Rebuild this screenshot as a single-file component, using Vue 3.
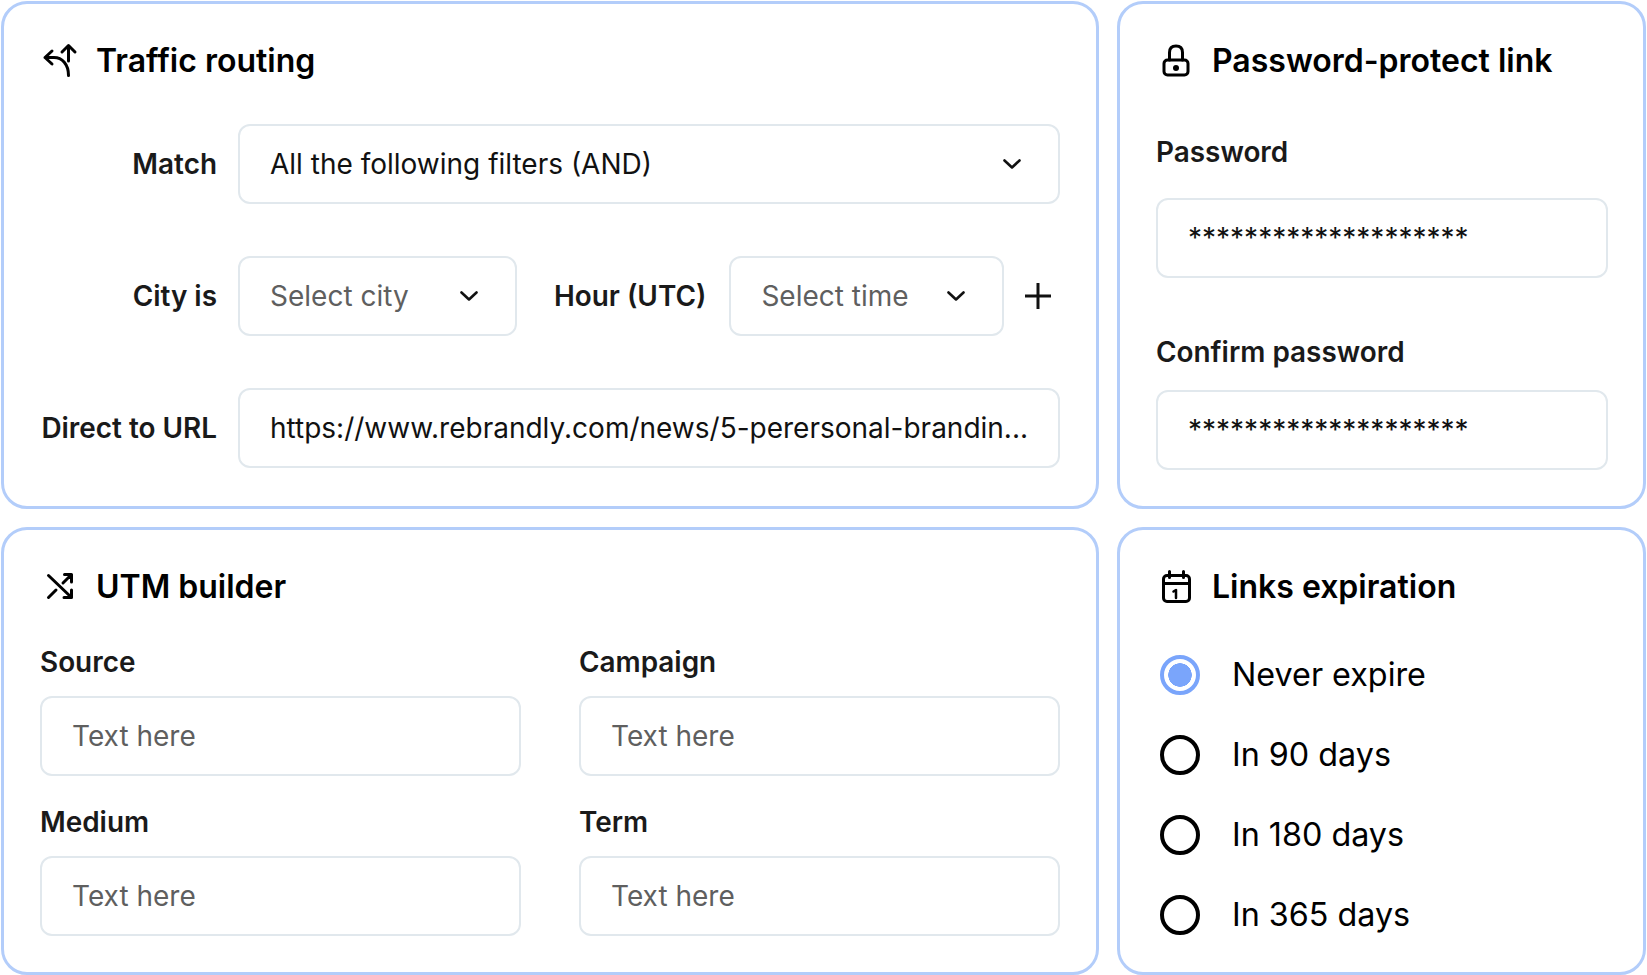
<script setup>
const utm = ['Source', 'Campaign', 'Medium', 'Term']
const options = [
  { label: 'Never expire', on: true },
  { label: 'In 90 days', on: false },
  { label: 'In 180 days', on: false },
  { label: 'In 365 days', on: false },
]
</script>

<template>
  <div class="page">
    <section class="card">
      <h2 class="title">
        <svg class="ico" viewBox="0 0 36 36"><path d="M12 9 5 15.500 12 22M5 15.500H14C22 15.500 28.500 22 28.500 33.500M22 10 28.500 3.500 35 10M28.500 3.500V19" /></svg>
        Traffic routing
      </h2>
      <div class="rows">
        <div class="row">
          <span class="lab side">Match</span>
          <div class="field grow">
            <span class="val">All the following filters (AND)</span>
            <svg class="chev" viewBox="0 0 18 10"><path d="M1.500 1.500 9 8.500 16.500 1.500" /></svg>
          </div>
        </div>
        <div class="row">
          <span class="lab side">City is</span>
          <div class="field city">
            <span class="ph">Select city</span>
            <svg class="chev" viewBox="0 0 18 10"><path d="M1.500 1.500 9 8.500 16.500 1.500" /></svg>
          </div>
          <span class="lab hour">Hour (UTC)</span>
          <div class="field time">
            <span class="ph">Select time</span>
            <svg class="chev" viewBox="0 0 18 10"><path d="M1.500 1.500 9 8.500 16.500 1.500" /></svg>
          </div>
          <svg class="plus" viewBox="0 0 26 26"><path d="M13 0V26M0 13H26" /></svg>
        </div>
        <div class="row">
          <span class="lab side">Direct to URL</span>
          <div class="field grow">
            <span class="val">https://www.rebrandly.com/news/5-perersonal-brandin...</span>
          </div>
        </div>
      </div>
    </section>

    <section class="card narrow">
      <h2 class="title">
        <svg class="ico" viewBox="0 0 36 36"><rect x="8" y="18" width="24" height="15" rx="3.500" /><path d="M13.500 18V10.500C13.500 6.300 16 4 20 4S26.500 6.300 26.500 10.500V18" /><circle class="dot" cx="20" cy="26" r="3" /></svg>
        Password-protect link
      </h2>
      <div class="lab pw1">Password</div>
      <div class="field pwf1"><span class="val stars">********************</span></div>
      <div class="lab pw2">Confirm password</div>
      <div class="field pwf2"><span class="val stars">********************</span></div>
    </section>

    <section class="card">
      <h2 class="title">
        <svg class="ico" viewBox="0 0 36 36"><path d="M8.500 7.500 31.500 29.500M31.500 22V29.500H24M24.500 6.500H31.500V14M31.500 6.500 23 15M8.500 29.500 16 22" /></svg>
        UTM builder
      </h2>
      <div class="utm">
        <div v-for="u in utm" :key="u" class="cell">
          <div class="lab cell-lab">{{ u }}</div>
          <div class="field"><span class="ph">Text here</span></div>
        </div>
      </div>
    </section>

    <section class="card narrow">
      <h2 class="title">
        <svg class="ico" viewBox="0 0 36 36"><rect x="7.500" y="7.500" width="26" height="26" rx="3.500" /><path d="M7.500 15.500H33.500M13.500 3.500V9.500M27.500 3.500V9.500" /><path class="one" d="M17.500 23.500 20 22V30" /></svg>
        Links expiration
      </h2>
      <div class="opts">
        <div v-for="o in options" :key="o.label" class="opt">
          <span class="radio" :class="{ on: o.on }"></span>
          <span class="opt-text">{{ o.label }}</span>
        </div>
      </div>
    </section>
  </div>
</template>

<style>
html, body { margin: 0; background: #fff; }
</style>

<style scoped>
.page {
  display: grid;
  grid-template-columns: 1098px 529px;
  grid-template-rows: 508px 448px;
  column-gap: 18px;
  row-gap: 18px;
  padding: 1px;
  width: 1647px;
  height: 975px;
  box-sizing: border-box;
  font-family: Inter, "Liberation Sans", sans-serif;
  color: #1a1a1a;
  overflow: hidden;
}
.card {
  border: 3px solid #b3cdfa;
  border-radius: 26px;
  padding: 38px 36px 0;
  box-sizing: border-box;
  min-width: 0;
}
.narrow { padding-right: 35px; }
.title {
  display: flex;
  align-items: center;
  gap: 20px;
  margin: 0;
  height: 36px;
  font-size: 32px;
  font-weight: 600;
  color: #000;
  white-space: nowrap;
}
.ico {
  width: 36px;
  height: 36px;
  flex: none;
  overflow: visible;
  fill: none;
  stroke: #000;
  stroke-width: 3;
  stroke-linecap: round;
  stroke-linejoin: round;
}
.ico .dot { fill: #000; stroke: none; }
.ico .one { stroke-width: 2.500; }
.rows {
  display: flex;
  flex-direction: column;
  gap: 52px;
  margin-top: 46px;
}
.row {
  display: flex;
  align-items: center;
}
.lab {
  font-size: 27.900px;
  font-weight: 600;
  line-height: 34px;
  white-space: nowrap;
}
.side {
  width: 177px;
  flex: none;
  text-align: right;
  margin-right: 21px;
}
.field {
  display: flex;
  align-items: center;
  justify-content: space-between;
  height: 80px;
  box-sizing: border-box;
  border: 2px solid #e1e8ed;
  border-radius: 12px;
  padding: 0 37px 0 30px;
  font-size: 28px;
  white-space: nowrap;
  min-width: 0;
}
.grow { flex: 1; }
.city { width: 279px; flex: none; }
.hour { margin: 0 23px 0 37px; }
.time { width: 275px; flex: none; }
.val { color: #111; }
.ph { color: #5f5f5f; }
.chev {
  width: 18px;
  height: 10px;
  flex: none;
  fill: none;
  stroke: #111;
  stroke-width: 2.600;
  stroke-linecap: round;
  stroke-linejoin: round;
}
.plus {
  width: 26px;
  height: 26px;
  flex: none;
  margin-left: 21px;
  fill: none;
  stroke: #111;
  stroke-width: 3;
  stroke-linecap: round;
}
.pw1 { margin-top: 57px; }
.pwf1 { margin-top: 29px; }
.pw2 { margin-top: 57px; }
.pwf2 { margin-top: 21px; }
.utm {
  display: grid;
  grid-template-columns: 1fr 1fr;
  column-gap: 58px;
  row-gap: 29px;
  margin-top: 41px;
}
.cell-lab { margin-bottom: 17px; }
.opts {
  display: flex;
  flex-direction: column;
  gap: 40px;
  margin-top: 51px;
}
.opt {
  display: flex;
  align-items: center;
  height: 40px;
  padding-left: 4px;
}
.radio {
  width: 40px;
  height: 40px;
  flex: none;
  box-sizing: border-box;
  border: 4px solid #000;
  border-radius: 50%;
  margin-right: 32px;
}
.radio.on {
  border-color: #7aa5fb;
  background: radial-gradient(circle, #7aa5fb 0 11.500px, #fff 12px);
}
.opt-text {
  font-size: 32.300px;
  color: #000;
  white-space: nowrap;
  padding-bottom: 2px;
}
</style>
